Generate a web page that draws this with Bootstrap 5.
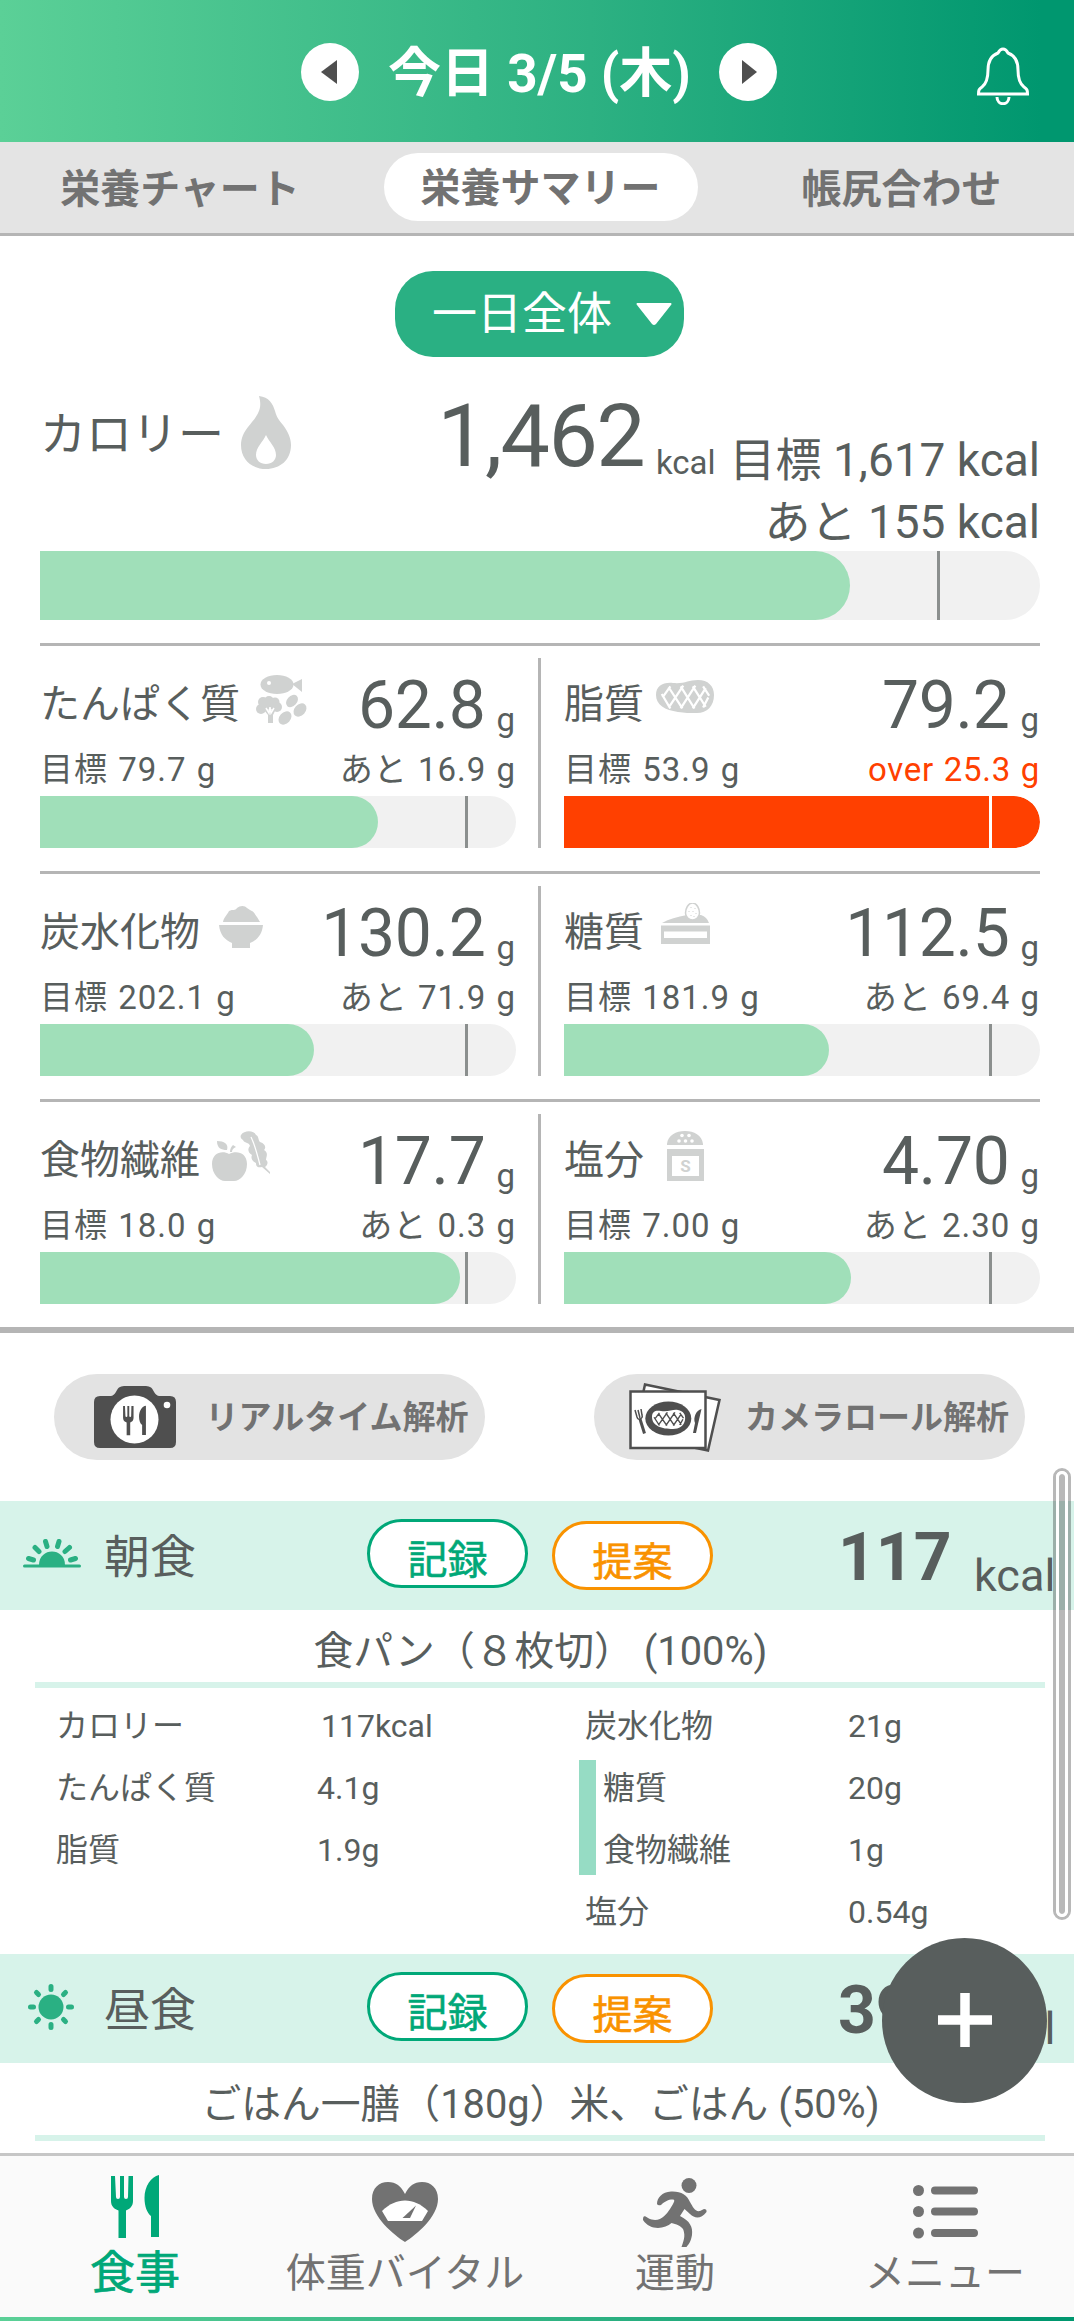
<!DOCTYPE html>
<html lang="ja">
<head>
<meta charset="utf-8">
<meta name="viewport" content="width=device-width, initial-scale=1">
<title>栄養サマリー</title>
<link href="https://cdn.jsdelivr.net/npm/bootstrap@5.3.0/dist/css/bootstrap.min.css" rel="stylesheet">
<style>
  :root { --ink:#585e5d; --soft:#727272; --green:#00a878; --mint:#d7f3ea; --rule:#b5b5b5; --pale:#d0d2d1; }
  body { font-family: Roboto, "Noto Sans CJK JP", sans-serif; color: var(--ink); background:#fff; width:1074px; height:2321px; overflow:hidden; position:relative; }
  svg { display:block; flex:none; }
  .app-top { height:142px; padding:2px 45px 0 301px; background:linear-gradient(90deg,#5bd097 0%,#2db182 55%,#00976f 97%); color:#fff; }
  .day-btn { width:58px; height:58px; border:0; padding:0; background:#fff; flex:none; }
  .day-title { width:360px; font-size:53px; line-height:60px; font-weight:700; padding:4px 0 0 1px; }
  .tabs { height:94px; background:#e4e4e4; border-bottom:3px solid var(--rule); overflow:hidden; }
  .tabs a { flex:0 0 361px; color:var(--soft); font-size:40px; font-weight:700; text-decoration:none; }
  .tabs a:first-child { flex-basis:360px; }
  .tabs span { height:68px; line-height:72px; border-radius:34px; }
  .tabs .on { width:314px; background:#fff; margin-top:-1px; }
  .range-btn { width:289px; height:86px; border-radius:38px; background:#2ab083; color:#fff; font-size:45px; line-height:91px; border:0; padding:0 12px 0 37px; margin:35px auto 0 395px; }
  .summary { padding:0 34px 0 40px; }
  .cal { height:194px; padding-top:23px; }
  .cal-name { font-size:46px; line-height:108px; }
  .cal-num { font-size:88px; line-height:112px; letter-spacing:-1.7px; }
  .cal-unit { font-size:33px; line-height:165px; margin:0 14px 0 12px; }
  .cal-goal { font-size:46px; line-height:62px; margin-top:49px; }
  .bar { height:52px; background:#f1f1f1; border-radius:0 26px 26px 0; position:relative; overflow:hidden; }
  .bar i { display:block; height:100%; background:#a0dfb9; border-radius:0 26px 26px 0; }
  .bar::after { content:""; position:absolute; top:0; bottom:0; left:calc(90% - 3px); width:3px; background:#8b8f8e; }
  .bar.big, .bar.big i { height:69px; border-radius:0 35px 35px 0; }
  .bar.over i { background:#ff4000; }
  .bar.over::after { background:#fff; }
  .pair { border-top:3px solid var(--rule); padding:12px 0 23px; }
  .nutri { width:476px; height:190px; }
  .vline { width:3px; background:var(--rule); margin:0 23px 0 22px; }
  .n-head { height:90px; }
  .n-name { font-size:40px; line-height:93px; }
  .n-icon { width:58px; height:50px; margin:17px 0 0 12px; }
  .n-num { font-size:66px; line-height:96px; letter-spacing:-.3px; }
  .n-unit { font-size:33px; line-height:124px; margin-left:11px; margin-right:1px; }
  .n-goal { font-size:33px; line-height:43px; letter-spacing:1px; word-spacing:1px; margin-bottom:5px; }
  .over-text { color:#ff4000; letter-spacing:.7px; }
  .scan { border-top:6px solid var(--rule); padding:41px 49px 41px 54px; }
  .scan button { width:431px; height:86px; border:0; border-radius:43px; background:#e3e3e3; color:var(--soft); font-size:33px; font-weight:700; padding:0; }
  .scan span { width:264px; line-height:88px; height:86px; }
  .meal-head { height:109px; background:var(--mint); }
  .meal-icon { width:104px; padding-left:23px; margin-top:-4px; }
  .meal-name { font-size:46px; line-height:112px; width:263px; }
  .pill { width:161px; height:69px; border:3px solid var(--green); color:var(--green); border-radius:35px; background:#fff; font-size:40px; line-height:77px; margin-top:18px; -webkit-text-stroke:.6px currentColor; }
  .pill.alt { border-color:#f99200; color:#f99200; margin:20px 0 0 24px; }
  .meal-num { font-size:66px; font-weight:700; line-height:114px; width:136px; margin-left:125px; }
  .meal-unit { font-size:45px; line-height:149px; height:109px; }
  .food { height:78px; margin:0 29px 0 35px; border-bottom:6px solid var(--mint); font-size:39.8px; line-height:83px; white-space:pre; padding-left:1px; }
  .facts { height:266px; padding:7px 0 0 56px; font-size:32px; line-height:62px; }
  .facts .k1 { width:261px; } .facts .v1 { width:262px; }
  .facts .k2 { width:269px; padding-left:6px; } .facts .k2s { padding-left:7px; width:252px; }
  .sub-group { display:flow-root; border-left:17px solid #96dcc4; height:115px; margin:3px 0 6px; }
  .sub-group > div:first-child { margin-top:-3px; }
  .scroller { position:absolute; left:1053px; top:1468px; width:18px; height:452px; border:3px solid rgba(0,0,0,.28); border-radius:9px; }
  .scroller::before { content:""; display:block; height:100%; border:3px solid #fff; border-radius:6px; background:rgba(0,0,0,.28) padding-box; }
  .fab { position:absolute; left:882px; top:1938px; width:165px; height:165px; background:var(--ink); border:0; padding:0 0 2px; }
  .tabbar { position:absolute; left:0; right:0; top:2153px; height:168px; background:#fafafa; border-top:3px solid #c6c6c6; }
  .tabbar::after { content:""; position:absolute; left:0; right:0; bottom:0; height:4px; background:linear-gradient(90deg,#5bd097,#2db182 55%,#00976f 97%); }
  .tabbar a { flex:0 0 270px; color:var(--soft); font-size:40px; line-height:50px; text-decoration:none; }
  .tabbar .glyph { height:93px; padding-top:13px; }
  .tabbar .sel { color:var(--green); font-size:45px; -webkit-text-stroke:.7px currentColor; }
</style>
</head>
<body>
<svg width="0" height="0" class="position-absolute">
  <symbol id="cutlery" viewBox="0 0 48 63"><path fill="currentColor" d="M0 1H4L5 22a2 2 0 0 0 4 0V1h4v21a2 2 0 0 0 4 0L17.5 1H22V26c0 5-3 8-7 9.5V63H7.5V35.5C3 34 0 31 0 26ZM48 0V62H40V41C36 38 33.5 31 33.5 23C33.5 11 40 2 48 0Z"/></symbol>
  <symbol id="hatch" viewBox="0 0 58 33"><path fill="none" stroke="currentColor" stroke-width="2.6" d="M3 17L12 4M10 29L27 3M24 30L41 3M38 30L53 6M50 29L56 17M2 13L12 30M10 5L26 30M24 4L40 30M38 4L53 28M50 4L57 15"/></symbol>
</svg>

<header class="app-top d-flex align-items-center">
  <button class="day-btn rounded-circle d-flex align-items-center justify-content-center"><svg width="18" height="24" viewBox="0 0 18 24"><path d="M16 0V24L0 12Z" fill="#4f4f4f"/></svg></button>
  <div class="day-title text-center text-nowrap">今日 3/5 (木)</div>
  <button class="day-btn rounded-circle d-flex align-items-center justify-content-center"><svg width="18" height="24" viewBox="0 0 18 24"><path d="M3 0V24L18 12Z" fill="#4f4f4f"/></svg></button>
  <svg class="ms-auto mt-2" width="52" height="58" viewBox="0 0 52 58" fill="none" stroke="#fff" stroke-width="3"><path d="M26 2C23 2 22 4 21 6C13 9 11 15 11 23C11 33 9 37 5 40C2 42 1.500 43 1.500 47H50.500C50.500 43 50 42 47 40C43 37 41 33 41 23C41 15 39 9 31 6C30 4 29 2 26 2ZM20 50C20 59 32 59 32 50"/></svg>
</header>

<nav class="tabs d-flex align-items-center text-center text-nowrap">
  <a href="#"><span class="d-block">栄養チャート</span></a>
  <a href="#"><span class="d-block on mx-auto">栄養サマリー</span></a>
  <a href="#"><span class="d-block">帳尻合わせ</span></a>
</nav>

<main>
  <button class="range-btn d-flex align-items-center justify-content-between text-nowrap">一日全体<svg width="36" height="22" viewBox="0 0 36 22"><path d="M1 0H35Q36 1 35 2L20 21Q18 23 16 21L1 2Q0 1 1 0Z" fill="#fff"/></svg></button>

  <section class="summary">
    <div class="cal d-flex text-nowrap">
      <div class="cal-name">カロリー</div>
      <svg style="margin:16px 0 0 17px" width="51" height="73" viewBox="0 0 51 73"><path fill="#d0d2d1" fill-rule="evenodd" d="M18 0C28 1 32 8 34 15C36 22 38 24 42 29C47 36 50 42 50 49C50 64 39 73 25 73C11 73 0 64 0 49C0 42 3 36 7 31C16 20 22 14 18 0ZM25 39C22 46 15 51 15 59C15 64 19 68 25 68C31 68 35 64 35 59C35 51 28 46 25 39Z"/></svg>
      <div class="cal-num ms-auto">1,462</div>
      <div class="cal-unit">kcal</div>
      <div class="cal-goal text-end">目標 1,617 kcal<br>あと 155 kcal</div>
    </div>
    <div class="bar big"><i style="width:81%"></i></div>

    <div class="pair d-flex text-nowrap" style="margin-top:23px">
      <div class="nutri">
        <div class="n-head d-flex"><div class="n-name">たんぱく質</div>
          <svg class="n-icon" viewBox="0 0 58 50" fill="#d0d2d1"><g transform="translate(4)"><ellipse cx="21" cy="9.500" rx="16.500" ry="9.500"/><path d="M36 9L46 4V17Z"/><circle cx="13" cy="8" r="2" fill="#fff"/><circle cx="5" cy="34" r="5"/><circle cx="7" cy="27" r="5"/><circle cx="13" cy="26" r="5"/><circle cx="19" cy="27" r="4.500"/><circle cx="21" cy="32" r="5"/><path d="M5 28H20V35H5ZM8 35L12 40V48H17V40L20 34Z"/><path d="M10 33L13 38L14 32L15 38L18 33" fill="none" stroke="#fff" stroke-width="1.500"/><ellipse cx="36" cy="26" rx="7" ry="5" transform="rotate(-48 36 26)"/><ellipse cx="44" cy="35" rx="7.500" ry="5.500" transform="rotate(-48 44 35)"/><ellipse cx="29" cy="43" rx="7.500" ry="5.500" transform="rotate(-48 29 43)"/></g></svg>
          <div class="n-num ms-auto">62.8</div><div class="n-unit">g</div></div>
        <div class="n-goal d-flex justify-content-between"><span>目標 79.7 g</span><span>あと 16.9 g</span></div>
        <div class="bar"><i style="width:71.1%"></i></div>
      </div>
      <div class="vline"></div>
      <div class="nutri">
        <div class="n-head d-flex"><div class="n-name">脂質</div>
          <svg class="n-icon" viewBox="0 0 58 50"><g transform="translate(0 5)"><path fill="#d0d2d1" d="M0 15C0 6 7 2 17 3C29 4 32 0 42 0C52 0 58 6 58 15C58 26 51 33 41 33C33 33 29 33 22 32C9 30 0 25 0 15Z"/><svg x="4" y="3" width="50" height="28" viewBox="0 0 58 33" preserveAspectRatio="none" color="#fff"><use href="#hatch"/></svg></g></svg>
          <div class="n-num ms-auto">79.2</div><div class="n-unit">g</div></div>
        <div class="n-goal d-flex justify-content-between"><span>目標 53.9 g</span><span class="over-text">over 25.3 g</span></div>
        <div class="bar over"><i style="width:100%"></i></div>
      </div>
    </div>

    <div class="pair d-flex text-nowrap">
      <div class="nutri">
        <div class="n-head d-flex"><div class="n-name">炭水化物</div>
          <svg class="n-icon" viewBox="0 0 58 50" fill="#d0d2d1"><g transform="translate(7 3)"><path d="M0 19H44C43 29 38 34 31 37V42H13V37C6 34 1 29 0 19ZM4 16C5 11 8 9 10 5C14 3 16 5 18 2C21 -.7 26 -.7 28 2L31 4C36 6 36 9 38 11L41 16Z"/></g></svg>
          <div class="n-num ms-auto">130.2</div><div class="n-unit">g</div></div>
        <div class="n-goal d-flex justify-content-between"><span>目標 202.1 g</span><span>あと 71.9 g</span></div>
        <div class="bar"><i style="width:57.6%"></i></div>
      </div>
      <div class="vline"></div>
      <div class="nutri">
        <div class="n-head d-flex"><div class="n-name">糖質</div>
          <svg class="n-icon" viewBox="0 0 58 50" fill="#d0d2d1"><g transform="translate(5 0)"><path d="M1 20C8 16 16 14 26 12H40Q46 14 48 20ZM0 22.500H49V41H0Z"/><path d="M3 28.500H46V35H3Z" fill="#fff"/><path d="M31.500 0C36 0 38.500 6 38.500 10C38.500 14 35 17 31.500 17S24.500 14 24.500 10C24.500 6 27 0 31.500 0Z" fill="#fff" stroke="#d0d2d1" stroke-width="1.500"/><path d="M30 4v1M34 5v1M28 8v1M32 8v1M35 10v1M30 12v1M33 13v1" stroke="#d0d2d1" stroke-width="1"/></g></svg>
          <div class="n-num ms-auto">112.5</div><div class="n-unit">g</div></div>
        <div class="n-goal d-flex justify-content-between"><span>目標 181.9 g</span><span>あと 69.4 g</span></div>
        <div class="bar"><i style="width:55.7%"></i></div>
      </div>
    </div>

    <div class="pair d-flex text-nowrap">
      <div class="nutri">
        <div class="n-head d-flex"><div class="n-name">食物繊維</div>
          <svg class="n-icon" viewBox="0 0 58 50" fill="#d0d2d1"><path d="M17 23C24 19 35 21 35 33C35 43 28 50 22 50C19 50 16 50 13 50C7 50 0 43 0 33C0 21 11 19 17 23ZM5 10C12 10 17 13 15 19C9 19 5 17 5 10ZM18 21C18 18 19 16 21 14L24 16C21 17 20 19 20 21Z"/><path d="M29 4C32-1 42-1 44 4C47 5 46 9 48 11C54 13 54 17 52 19C57 22 54 26 54 29C57 31 55 35 53 36L58 41V43L50 36C45 37 44 35 44 32C39 30 39 26 40 24C35 21 36 17 38 15C37 11 32 12 31 9C29 8 28 6 29 4Z"/><path d="M39 6C43 14 45 22 48 34" fill="none" stroke="#fff" stroke-width="1.300"/></svg>
          <div class="n-num ms-auto">17.7</div><div class="n-unit">g</div></div>
        <div class="n-goal d-flex justify-content-between"><span>目標 18.0 g</span><span>あと 0.3 g</span></div>
        <div class="bar"><i style="width:88.2%"></i></div>
      </div>
      <div class="vline"></div>
      <div class="nutri">
        <div class="n-head d-flex"><div class="n-name">塩分</div>
          <svg class="n-icon" viewBox="0 0 58 50" fill="#d0d2d1"><g transform="translate(11)"><path d="M0 14V13C1 4 9 0 18 0S35 4 36 13V14ZM0 18H37V50H0Z"/><path d="M5 25H32V45H5Z" fill="#fff"/><g fill="#fff"><circle cx="15" cy="4.500" r="1.800"/><circle cx="22" cy="4.500" r="1.800"/><circle cx="12" cy="10" r="1.800"/><circle cx="18.500" cy="10" r="1.800"/><circle cx="25" cy="10" r="1.800"/></g><text x="18.500" y="41" text-anchor="middle" font-size="17" font-weight="700" font-family="Roboto">S</text></g></svg>
          <div class="n-num ms-auto">4.70</div><div class="n-unit">g</div></div>
        <div class="n-goal d-flex justify-content-between"><span>目標 7.00 g</span><span>あと 2.30 g</span></div>
        <div class="bar"><i style="width:60.3%"></i></div>
      </div>
    </div>
  </section>

  <section class="scan d-flex justify-content-between text-nowrap">
    <button class="d-flex align-items-center"><svg style="margin:0 29px 0 40px" width="82" height="62" viewBox="0 0 82 62" color="#4f4f4f"><path fill="currentColor" d="M6 10H17C22 9 22 4 25 1.500Q27 0 30 0H52Q55 0 57 1.500C60 4 60 9 65 10H76Q82 10 82 16V56Q82 62 76 62H6Q0 62 0 56V16Q0 10 6 10Z"/><circle cx="40.500" cy="33.500" r="24" fill="#fff"/><circle cx="73" cy="19" r="3.300" fill="#fff"/><use href="#cutlery" x="29" y="19.500" width="23" height="30"/></svg><span>リアルタイム解析</span></button>
    <button class="d-flex align-items-center"><svg style="margin:0 24px 0 35px" width="92" height="69" viewBox="0 0 92 69" color="#4f4f4f"><g fill="#fff" stroke="#4f4f4f" stroke-width="2.500"><path d="M16 1.500L90.500 17L79 67.500L5 52Z"/><path d="M1.500 8.500H76.500V65H1.500Z"/></g><ellipse cx="39.300" cy="35.500" rx="23" ry="17" fill="currentColor"/><path fill="#fff" d="M23 34C23 28 27 27 32 28C40 29 44 26 49 27C54 28 57 31 56 37C55 43 50 46 44 46C33 46 23 43 23 34Z"/><svg x="24" y="28" width="31" height="16" viewBox="0 0 58 33" preserveAspectRatio="none"><use href="#hatch"/></svg><g fill="none" stroke="currentColor"><path d="M6 27L8 34Q9 37 11 36Q14 35 13 32L12 26M9 27L11 35" stroke-width="1.500"/><path d="M11 36L15.500 50.500" stroke-width="3"/></g><path fill="currentColor" d="M72.500 26L69 41L67 50H64L66 40C64 35 67 27 72.500 26Z"/></svg><span>カメラロール解析</span></button>
  </section>

  <section>
    <div class="meal-head d-flex text-nowrap">
      <div class="meal-icon d-flex align-items-center"><svg width="58" height="29" viewBox="0 0 58 29"><path fill="#2ab083" d="M16 26C16 8 42 8 42 26Z"/><path d="M1.500 27H56.500" stroke="#2ab083" stroke-width="3" stroke-linecap="round"/><path d="M22.500 2.500L24 7.500M36 2.500L34.500 7.500M12 8.500L16 12.500M46.500 8.500L42 12.500M5.500 19.500L10.500 21M52.500 19.500L47.500 21" stroke="#2ab083" stroke-width="5" stroke-linecap="round"/></svg></div>
      <div class="meal-name">朝食</div>
      <div class="pill text-center">記録</div><div class="pill alt text-center">提案</div>
      <div class="meal-num">117</div><div class="meal-unit">kcal</div>
    </div>
    <div class="food text-center">食パン（８枚切） (100%)</div>
    <div class="facts d-flex text-nowrap">
      <div class="k1"><div>カロリー</div><div>たんぱく質</div><div>脂質</div></div>
      <div class="v1"><div class="ps-1">117kcal</div><div>4.1g</div><div>1.9g</div></div>
      <div>
        <div class="d-flex"><div class="k2">炭水化物</div><div>21g</div></div>
        <div class="sub-group">
          <div class="d-flex"><div class="k2s">糖質</div><div>20g</div></div>
          <div class="d-flex"><div class="k2s">食物繊維</div><div>1g</div></div>
        </div>
        <div class="d-flex"><div class="k2">塩分</div><div>0.54g</div></div>
      </div>
    </div>
  </section>

  <section>
    <div class="meal-head d-flex text-nowrap">
      <div class="meal-icon d-flex align-items-center"><svg class="ms-1" width="48" height="48" viewBox="-24 -24 48 48"><circle r="12.500" fill="#2ab083"/><g stroke="#2ab083" stroke-width="5" stroke-linecap="round"><path d="M0-20.500V-17.500M0 20.500V17.500M-20.500 0H-17.500M20.500 0H17.500M-14.500-14.500L-12.500-12.500M14.500-14.500L12.500-12.500M-14.500 14.500L-12.500 12.500M14.500 14.500L12.500 12.500"/></g></svg></div>
      <div class="meal-name">昼食</div>
      <div class="pill text-center">記録</div><div class="pill alt text-center">提案</div>
      <div class="meal-num">394</div><div class="meal-unit">kcal</div>
    </div>
    <div class="food text-center">ごはん一膳（180g）米、ごはん (50%)</div>
  </section>
</main>

<div class="scroller"></div>
<button class="fab rounded-circle d-flex align-items-center justify-content-center"><svg width="54" height="54" viewBox="0 0 54 54"><path d="M0 27H54M27 0V54" stroke="#fff" stroke-width="9.500"/></svg></button>

<nav class="tabbar d-flex text-center text-nowrap">
  <a href="#" class="sel"><div class="glyph d-flex align-items-center justify-content-center"><svg width="48" height="63" style="margin-bottom:-2px;margin-top:-7px"><use href="#cutlery"/></svg></div>食事</a>
  <a href="#"><div class="glyph d-flex align-items-center justify-content-center"><svg width="66" height="60" viewBox="0 0 66 60" style="margin-top:6px"><path fill="#727272" d="M33 60C22 53 0 35 0 17C0 6 7 0 16 0C24 0 29 4 33 12C37 4 42 0 50 0C59 0 66 6 66 17C66 35 44 53 33 60Z"/><path fill="#fff" d="M10 29C24 15 42 15 56 29L50 39H16Z"/><path fill="#727272" d="M44 23.500L38 36H30.500Z"/></svg></div>体重バイタル</a>
  <a href="#"><div class="glyph d-flex align-items-center justify-content-center"><svg width="64" height="69" viewBox="0 0 64 69" style="margin-top:7px"><g fill="#727272"><circle cx="46" cy="7.500" r="7.500"/><path d="M14 26C14 20 19 14 28 13.500C38 13 44 17 47 24C50 29 52 34 57 33L61 31Q64 31 63.500 34C58 41 52 41 47 36L41.500 31L37 38C47 43 50 49 49 57C48 63 46 66 43.500 69H38.500C42 60 42 56 40 51C38 48 33 46 28.500 45C22 51 7 53 0 42C0 38 1 37 5 40C16 46 23 37 27 31C32 23 33 21 28 21.500C24 22 20 25 18 27Q15 28 14 26Z"/></g></svg></div>運動</a>
  <a href="#"><div class="glyph d-flex align-items-center justify-content-center"><svg width="65" height="54" viewBox="0 0 65 54" style="margin-top:5px"><g fill="#727272"><circle cx="5.500" cy="5.500" r="5.500"/><circle cx="5.500" cy="26.500" r="5.500"/><circle cx="5.500" cy="48" r="5.500"/></g><path d="M22 5.500H61M22 26.500H61M22 48H61" stroke="#727272" stroke-width="8" stroke-linecap="round"/></svg></div>メニュー</a>
</nav>
<script src="https://cdn.jsdelivr.net/npm/bootstrap@5.3.0/dist/js/bootstrap.bundle.min.js"></script>
</body>
</html>
